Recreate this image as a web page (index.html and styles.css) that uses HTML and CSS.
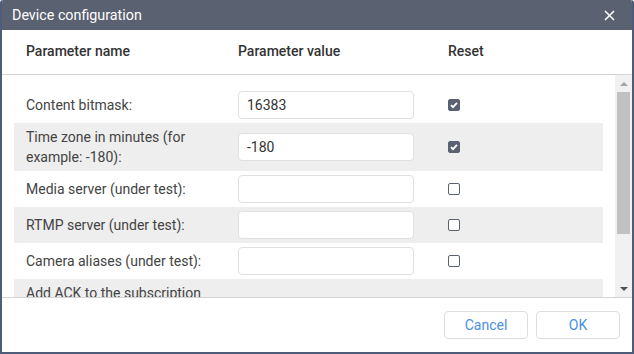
FILE: index.html
```html
<!DOCTYPE html>
<html>
<head>
<meta charset="utf-8">
<link rel="stylesheet" href="styles.css">
</head>
<body>
<div class="dialog">
  <div class="titlebar">
    <span class="title">Device configuration</span>
    <svg class="close" width="11" height="11" viewBox="0 0 11 11"><path d="M1 1L10 10M10 1L1 10" stroke="#fff" stroke-width="1.6" fill="none"/></svg>
  </div>
  <div class="colhead">
    <span>Parameter name</span>
    <span>Parameter value</span>
    <span>Reset</span>
  </div>
  <div class="bodywrap">
    <div class="list">
      <div class="row">
        <div class="name">Content bitmask:</div>
        <div class="value"><div class="input">16383</div></div>
        <div class="reset"><span class="cb checked"><svg width="12" height="12" viewBox="0 0 12 12"><path d="M3 6.2L5 8.2L9 3.8" stroke="#fff" stroke-width="1.8" fill="none"/></svg></span></div>
      </div>
      <div class="row alt">
        <div class="name">Time zone in minutes (for example: -180):</div>
        <div class="value"><div class="input">-180</div></div>
        <div class="reset"><span class="cb checked"><svg width="12" height="12" viewBox="0 0 12 12"><path d="M3 6.2L5 8.2L9 3.8" stroke="#fff" stroke-width="1.8" fill="none"/></svg></span></div>
      </div>
      <div class="row">
        <div class="name">Media server (under test):</div>
        <div class="value"><div class="input"></div></div>
        <div class="reset"><span class="cb"></span></div>
      </div>
      <div class="row alt">
        <div class="name">RTMP server (under test):</div>
        <div class="value"><div class="input"></div></div>
        <div class="reset"><span class="cb"></span></div>
      </div>
      <div class="row">
        <div class="name">Camera aliases (under test):</div>
        <div class="value"><div class="input"></div></div>
        <div class="reset"><span class="cb"></span></div>
      </div>
      <div class="row alt">
        <div class="name">Add ACK to the subscription messages:</div>
        <div class="value"><span class="cb"></span></div>
        <div class="reset"><span class="cb"></span></div>
      </div>
    </div>
    <div class="scrollbar">
      <div class="sbtn"><span class="arrow-up"></span></div>
      <div class="track"><div class="thumb"></div></div>
      <div class="sbtn"><span class="arrow-down"></span></div>
    </div>
  </div>
  <div class="footer">
    <button class="btn">Cancel</button>
    <button class="btn">OK</button>
  </div>
</div>
</body>
</html>
```
FILE: styles.css
```css
* { box-sizing: border-box; }
html, body { margin: 0; padding: 0; }
body {
  width: 634px;
  height: 354px;
  font-family: Roboto, "Liberation Sans", sans-serif;
  color: #333;
  background: #fff;
}
.dialog {
  width: 634px;
  height: 354px;
  border: 2px solid #4e5c79;
  border-top: 0;
  border-radius: 3px 3px 0 0;
  display: flex;
  flex-direction: column;
  overflow: hidden;
  background: #fff;
}
.titlebar {
  height: 30px;
  flex: none;
  background: #5a6171;
  display: flex;
  align-items: center;
  justify-content: space-between;
  padding: 0 17px 0 10px;
}
.title {
  color: #fff;
  font-size: 14.3px;
}
.close { display: block; margin-top: 1px; }
.colhead {
  height: 45px;
  flex: none;
  border-bottom: 1px solid #d4d4d4;
  display: grid;
  grid-template-columns: 212px 210px 1fr;
  align-items: center;
  padding-left: 24px;
  font-size: 14px;
  font-weight: 500;
  color: #333;
  padding-bottom: 2px;
}
.bodywrap {
  flex: 1;
  min-height: 0;
  display: flex;
  border-bottom: 1px solid #d4d4d4;
}
.list {
  flex: 1;
  overflow: hidden;
  padding: 12px 12px 0 12px;
}
.row {
  display: grid;
  grid-template-columns: 212px 210px 1fr;
  align-items: center;
  min-height: 36px;
  padding: 4px 0 4px 12px;
  font-size: 14px;
  line-height: 20px;
  color: #444;
}
.row.alt { background: #eeeeee; }
.name { padding-right: 30px; }
.value { display: flex; align-items: center; }
.input {
  width: 176px;
  height: 28px;
  border: 1px solid #e0e0e0;
  border-radius: 4px;
  background: #fff;
  padding: 0 8px;
  font-size: 14px;
  line-height: 26px;
  color: #333;
}
.reset { display: flex; align-items: center; }
.cb {
  width: 12px;
  height: 12px;
  border: 1.3px solid #5a6171;
  border-radius: 2px;
  background: #fff;
  display: block;
  position: relative;
}
.cb svg { position: absolute; left: -1.3px; top: -1.3px; }
.cb.checked { background: #5a6171; }
.scrollbar {
  width: 17px;
  flex: none;
  background: #f1f1f1;
  display: flex;
  flex-direction: column;
}
.sbtn {
  height: 17px;
  flex: none;
  display: flex;
  align-items: center;
  justify-content: center;
}
.arrow-up {
  width: 0; height: 0;
  border-left: 4px solid transparent;
  border-right: 4px solid transparent;
  border-bottom: 4px solid #a3a3a3;
}
.arrow-down {
  width: 0; height: 0;
  border-left: 4px solid transparent;
  border-right: 4px solid transparent;
  border-top: 4px solid #505050;
}
.track { flex: 1; padding: 0 2px; }
.thumb {
  height: 142px;
  background: #c1c1c1;
}
.footer {
  height: 54px;
  flex: none;
  display: flex;
  justify-content: flex-end;
  align-items: flex-start;
  gap: 8px;
  padding: 13px 12px 0 0;
}
.btn {
  width: 84px;
  height: 28px;
  border: 1px solid #dedede;
  border-radius: 4px;
  background: #fff;
  color: #4a8fe7;
  font-family: Roboto, "Liberation Sans", sans-serif;
  font-size: 14px;
  padding: 0;
}
```
